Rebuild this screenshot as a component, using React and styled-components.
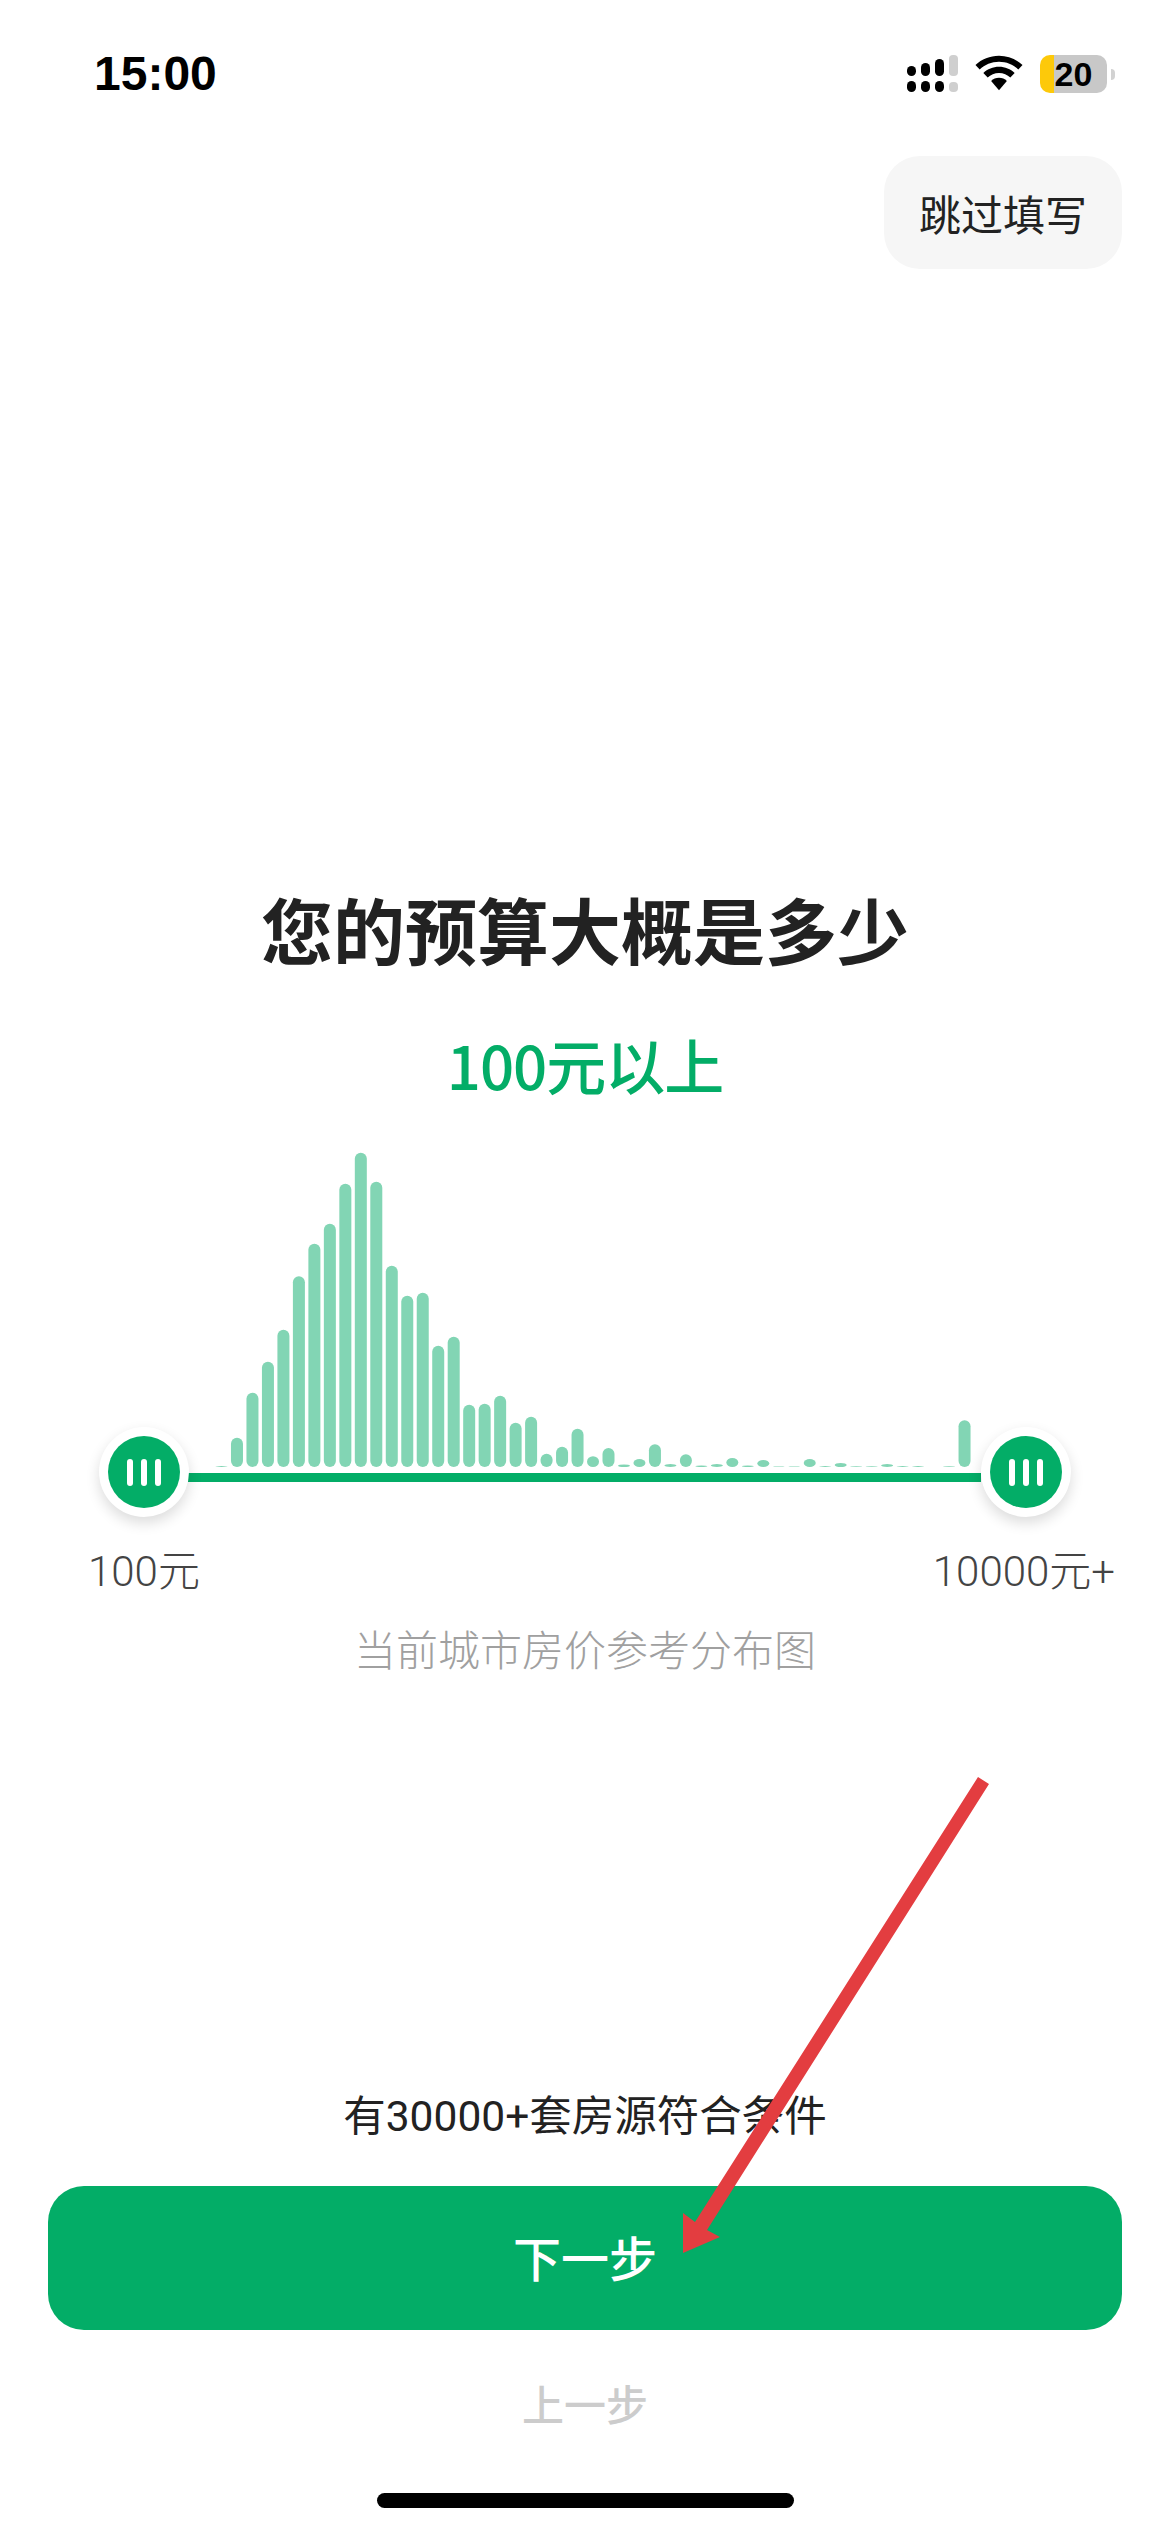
import React from "react";
import styled, { createGlobalStyle } from "styled-components";

const cjk = `"Noto Sans CJK SC", "Noto Sans", sans-serif`;
const mixed = `Roboto, "Noto Sans CJK SC", sans-serif`;
const GREEN = "#03ad67";

const Global = createGlobalStyle`
  html, body { margin: 0; padding: 0; background: #fff; }
  * { box-sizing: border-box; }
`;

const Page = styled.div`
  position: relative; width: 1170px; height: 2532px; background: #fff; overflow: hidden;
  font-family: ${cjk}; display: flex; flex-direction: column;
`;
const StatusBar = styled.div`
  height: 54px; margin-top: 47px; padding: 0 55px 0 94px;
  display: flex; align-items: center; justify-content: space-between;
`;
const Time = styled.div`
  font: 700 48px/54px "Liberation Sans", sans-serif; color: #000;
`;
const StatusIcons = styled.div`display: flex; align-items: center;`;
const Battery = styled.div`
  width: 67px; height: 38px; margin-left: 17px; border-radius: 10px; overflow: hidden;
  background: linear-gradient(to right, #fdc90a 0 14px, #c8c8c8 14px);
  display: flex; align-items: center; justify-content: center;
  font: 700 34px/38px "Liberation Sans", sans-serif; color: #000;
`;
const BatteryNub = styled.div`
  width: 4px; height: 11px; margin-left: 4px; border-radius: 0 5px 5px 0; background: #d2d2d2;
`;
const TopActions = styled.div`display: flex; justify-content: flex-end; padding: 55px 48px 0 0;`;
const SkipButton = styled.div`
  width: 238px; height: 113px; border-radius: 36px; background: #f6f6f6; color: #222;
  font-size: 42px; display: flex; align-items: center; justify-content: center;
`;
const Title = styled.h1`
  margin: 0; margin-top: 609px; text-align: center; font-size: 72px; line-height: 100px; font-weight: 700; color: #222;
`;
const Range = styled.div`
  margin-top: 44px; text-align: center; font-size: 60px; line-height: 84px; font-weight: 500;
  letter-spacing: -1px; color: ${GREEN};
`;
const ChartBox = styled.div`
  margin-top: 43px; height: 318px;
  & > svg { display: block; }
`;
const Slider = styled.div`
  position: relative; height: 9px; margin: 6px 189px 0 188px; background: ${GREEN};
`;
const Thumb = styled.div`
  position: absolute; top: -46px; ${p => (p.$side === "left" ? "left: -89px;" : "right: -90px;")}
  width: 90px; height: 90px; border-radius: 50%; background: #fff;
  box-shadow: 0 6px 14px rgba(0,0,0,.14);
  display: flex; align-items: center; justify-content: center;
`;
const ThumbCore = styled.div`
  width: 72px; height: 72px; border-radius: 50%; background: ${GREEN};
  display: flex; align-items: center; justify-content: center; gap: 8px;
`;
const Grip = styled.span`width: 6px; height: 27px; border-radius: 3px; background: #fff;`;
const Scale = styled.div`
  margin-top: 62px; padding: 0 55px 0 88px; display: flex; justify-content: space-between;
  font-family: ${mixed}; font-size: 42px; line-height: 56px; font-weight: 300; color: #444;
`;
const Caption = styled.div`
  margin-top: 19px; text-align: center; font-size: 42px; line-height: 58px; color: #a0a0a0; font-weight: 300;
`;
const Spacer = styled.div`flex: 1;`;
const Match = styled.div`
  text-align: center; font-family: ${mixed}; font-size: 42.5px; line-height: 58px; color: #222; margin-bottom: 40px;
`;
const NextButton = styled.div`
  margin: 0 48px; height: 144px; padding-bottom: 5px; border-radius: 36px; background: ${GREEN}; color: #fff;
  font-size: 48px; font-weight: 500; display: flex; align-items: center; justify-content: center;
`;
const PrevButton = styled.div`
  margin-top: 44px; text-align: center; font-size: 42px; line-height: 58px; font-weight: 500; color: #ccc;
`;
const HomeBar = styled.div`
  width: 417px; height: 15px; border-radius: 8px; background: #000; margin: 61px 0 24px 377px;
`;
const Arrow = styled.svg`position: absolute; left: 0; top: 0; pointer-events: none;`;

const bars = [1,29.3,74.3,105.3,137.3,190.7,223.3,243.3,283.3,314.3,285.3,201.3,171.3,174.3,121.3,130.3,62.3,63.3,71.3,44.3,50.3,13.3,20.3,38.3,10.7,19,2.5,8,22.7,3,12.7,1.5,3,9,1.5,7,0.5,0.5,8,1,4,0.7,0.7,3,1,1,0,0.7,46.7];
const CHART_H = 318;

function Chart() {
  return (
    <svg width="1170" height={CHART_H} viewBox={`0 0 1170 ${CHART_H}`}>
      {bars.map((h, i) => h > 0 && (
        <rect key={i} x={221.5 + i * 15.48 - 6} y={CHART_H - h} width="12" height={h} rx="6" ry={Math.min(6, h / 2)} fill="#82d5b4" />
      ))}
    </svg>
  );
}

function Handle({ side }) {
  return (
    <Thumb $side={side}>
      <ThumbCore><Grip /><Grip /><Grip /></ThumbCore>
    </Thumb>
  );
}

export default function App() {
  return (
    <Page>
      <Global />
      <StatusBar>
        <Time>15:00</Time>
        <StatusIcons>
          <svg width="52" height="38" viewBox="0 0 52 38">
            <g fill="#000">
              <rect x="0" y="26" width="9" height="11" rx="4.5" /><rect x="0" y="11" width="9" height="10" rx="4.5" />
              <rect x="14" y="26" width="9" height="11" rx="4.5" /><rect x="14" y="8" width="9" height="13" rx="4.5" />
              <rect x="28" y="26" width="9" height="11" rx="4.5" /><rect x="28" y="4" width="9" height="17" rx="4.5" />
            </g>
            <g fill="#cfcfcf">
              <rect x="42" y="27" width="9" height="10" rx="4" /><rect x="42" y="0" width="9" height="21" rx="4" />
            </g>
          </svg>
          <svg width="48" height="38" viewBox="0 0 50 38" style={{ marginLeft: 16 }}>
            <path d="M25 0C15.500 0 7 3.600.5 9.600l4.400 4.600C10.200 9.200 17.200 6.200 25 6.200s14.800 3 20.100 8L49.500 9.600C43 3.600 34.500 0 25 0z" />
            <path d="M25 11.500c-6.300 0-12 2.400-16.300 6.400l4.500 4.700c3.100-2.900 7.200-4.700 11.800-4.700s8.700 1.800 11.800 4.700l4.500-4.700C37 13.900 31.300 11.500 25 11.500z" />
            <path d="M25 23c-3.200 0-6 1.200-8.200 3.200L25 36l8.200-9.800C31 24.200 28.200 23 25 23z" />
          </svg>
          <Battery>20</Battery>
          <BatteryNub />
        </StatusIcons>
      </StatusBar>
      <TopActions><SkipButton>跳过填写</SkipButton></TopActions>
      <Title>您的预算大概是多少</Title>
      <Range>100元以上</Range>
      <ChartBox><Chart /></ChartBox>
      <Slider><Handle side="left" /><Handle side="right" /></Slider>
      <Scale><span>100元</span><span>10000元+</span></Scale>
      <Caption>当前城市房价参考分布图</Caption>
      <Spacer />
      <Match>有30000+套房源符合条件</Match>
      <NextButton>下一步</NextButton>
      <PrevButton>上一步</PrevButton>
      <HomeBar />
      <Arrow width="1170" height="2532" viewBox="0 0 1170 2532">
        <polygon points="978,1777 989,1784 707,2230 720,2237 683,2253 683,2213 695,2222" fill="#e33d40" />
      </Arrow>
    </Page>
  );
}
